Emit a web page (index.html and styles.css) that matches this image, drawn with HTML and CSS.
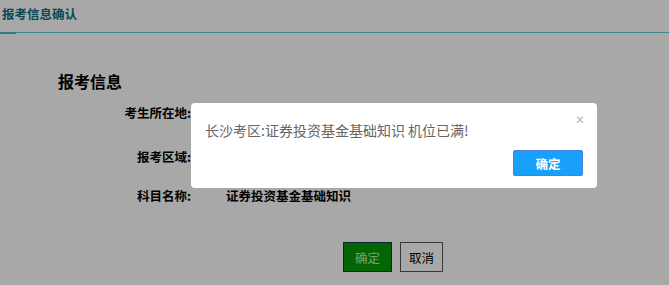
FILE: index.html
```html
<!DOCTYPE html>
<html lang="zh-CN">

<head>
    <meta charset="UTF-8">
    <meta name="viewport" content="width=device-width, initial-scale=1.0">
    <title>报考信息确认</title>
    <link rel="stylesheet" href="styles.css">
</head>

<body>
    <div class="tabs">
        <div class="tab active">报考信息确认</div>
    </div>

    <div class="content">
        <h2>报考信息</h2>
        <div class="form">
            <div class="row row-first">
                <span class="label">考生所在地:</span>
                <span class="value">湖南省长沙市</span>
            </div>
            <div class="row row-second">
                <span class="label">报考区域:</span>
                <span class="value">长沙考区</span>
            </div>
            <div class="row row-third">
                <span class="label">科目名称:</span>
                <span class="value">证券投资基金基础知识</span>
            </div>
        </div>
        <div class="actions">
            <button class="btn btn-ok">确定</button>
            <button class="btn btn-cancel">取消</button>
        </div>
    </div>

    <!-- 弹出提示 -->
    <div class="shade"></div>
    <div class="dialog">
        <span class="dialog-close">&#x2715;</span>
        <div class="dialog-text">长沙考区:证券投资基金基础知识 机位已满!</div>
        <div class="dialog-btns">
            <button class="dialog-btn">确定</button>
        </div>
    </div>
</body>

</html>
```

FILE: styles.css
```css
/* 页面基础 */
body {
    margin: 0;
    padding: 0;
    font-family: "Noto Sans CJK SC", "Liberation Sans", sans-serif;
    background-color: #fff;
    color: #000;
}

.tabs {
    height: 32px;
    border-bottom: 1px solid #5fd0d0;
}

.tab {
    display: inline-block;
    padding: 2px 2px 0;
    font-size: 12.5px;
    font-weight: bold;
    line-height: 16px;
    color: #0e6f7a;
    position: relative;
    height: 28px;
}

.tab.active::after {
    content: "";
    position: absolute;
    left: 0;
    bottom: 0;
    width: 16px;
    height: 2px;
    background-color: #3fc0c0;
}

.content {
    padding: 38px 0 0 58px;
}

h2 {
    margin: 0;
    font-size: 16px;
    line-height: 20px;
    font-weight: bold;
}

.form {
    margin-top: 13px;
}

.row {
    display: flex;
    font-size: 12.5px;
    font-weight: bold;
    line-height: 18px;
}

.row-second {
    margin-top: 26px;
}

.row-third {
    margin-top: 21px;
}

.label {
    width: 133px;
    text-align: right;
}

.value {
    margin-left: 35px;
}

.actions {
    display: flex;
    gap: 8px;
    margin: 37px 0 0 285px;
}

.btn {
    font-family: inherit;
    font-size: 12.5px;
    height: 30px;
    padding: 0;
    cursor: pointer;
}

.btn-ok {
    width: 49px;
    background-color: #069a06;
    border: 1px solid #0a3a4a;
    color: #bdf5a0;
}

.btn-cancel {
    width: 43px;
    background-color: #fff;
    border: 1px solid #555;
    color: #000;
}

/* 遮罩与弹窗 */
.shade {
    position: fixed;
    inset: 0;
    background-color: rgba(0, 0, 0, 0.34);
}

.dialog {
    position: absolute;
    left: 191px;
    top: 103px;
    width: 406px;
    height: 85px;
    box-sizing: border-box;
    padding: 17px 14px 0;
    background-color: #fff;
    border-radius: 4px;
}

.dialog-close {
    position: absolute;
    right: 12px;
    top: 7px;
    font-size: 12px;
    color: #bbb;
}

.dialog-text {
    font-size: 14px;
    line-height: 20px;
    color: #666;
}

.dialog-btns {
    display: flex;
    justify-content: flex-end;
    margin-top: 10px;
}

.dialog-btn {
    width: 70px;
    height: 26px;
    border: 1px solid #4a7fe0;
    border-radius: 2px;
    background-color: #18a0fb;
    color: #fff;
    font-family: inherit;
    font-size: 12.5px;
    font-weight: bold;
    cursor: pointer;
}
```
